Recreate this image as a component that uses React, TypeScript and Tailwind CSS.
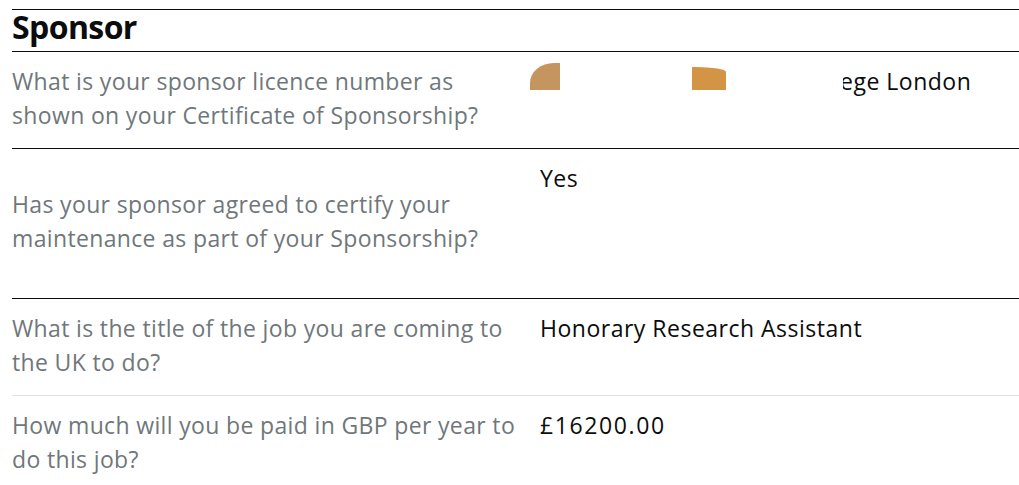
const rows = [
  {
    q: ['What is your sponsor licence number as', 'shown on your Certificate of Sponsorship?'],
    redacted: true,
  },
  {
    q: ['Has your sponsor agreed to certify your', 'maintenance as part of your Sponsorship?'],
    a: 'Yes',
    tall: true,
  },
  {
    q: ['What is the title of the job you are coming to', 'the UK to do?'],
    a: 'Honorary Research Assistant',
  },
  {
    q: ['How much will you be paid in GBP per year to', 'do this job?'],
    a: '£16200.00',
    wide: true,
    light: true,
  },
]

const App = () => {
  return (
    <div className="min-h-screen bg-white pl-3 pt-[9px] font-['Open_Sans',Arial,sans-serif] text-[#0b0c0c]">
      <h2 className="border-t border-[#0b0c0c] pt-[1px] pb-[8px] text-[32px] leading-[32px] font-bold tracking-[-0.6px]">
        Sponsor
      </h2>
      <dl>
        {rows.map((row) => (
          <div
            key={row.q[0]}
            className={`grid grid-cols-[528px_1fr] border-t ${row.light ? 'border-[#e1e1e1]' : 'border-[#0b0c0c]'} ${row.tall ? 'h-[150px]' : ''}`}
          >
            <dt
              className={`text-[23px] leading-[34px] tracking-[0.35px] text-[#6f777b] ${row.tall ? 'self-center pb-[5px]' : 'pt-[12px] pb-[16px]'}`}
            >
              {row.q.map((line) => (
                <span key={line} className="block whitespace-nowrap">
                  {line}
                </span>
              ))}
            </dt>
            <dd
              className={`relative pt-[12px] text-[23px] leading-[34px] ${row.wide ? 'tracking-[1.6px]' : 'tracking-[0.5px]'}`}
            >
              {row.redacted ? (
                <>
                  <div className="absolute left-[-10px] top-[11px] h-[27px] w-[30px] rounded-tl-[24px_20px] bg-[#c4955f] blur-[0.6px]" />
                  <div className="absolute left-[152px] top-[15px] h-[23px] w-[34px] rounded-tr-[30px_5px] bg-[#d39446] blur-[0.6px]" />
                  <span className="block pl-[300px]">ege London</span>
                  <div className="absolute left-[294px] top-[20px] h-[24px] w-[9px] bg-white" />
                </>
              ) : (
                row.a
              )}
            </dd>
          </div>
        ))}
      </dl>
    </div>
  )
}

export default App
